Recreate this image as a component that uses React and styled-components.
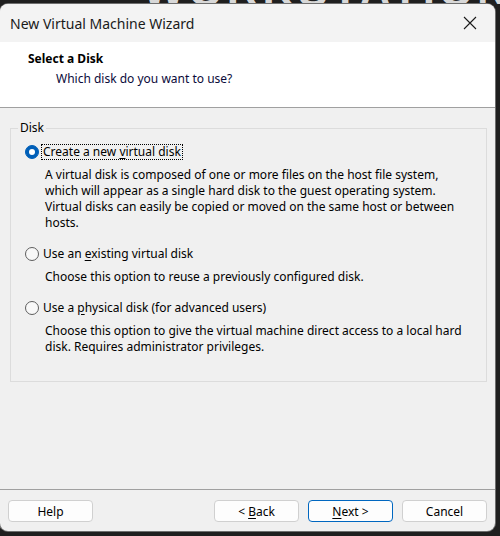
import styled, { createGlobalStyle } from "styled-components";

const GlobalStyle = createGlobalStyle`
  html, body {
    margin: 0;
    padding: 0;
    background: #1f1f1f;
  }
  * {
    box-sizing: border-box;
  }
`;

const Desktop = styled.div`
  width: 500px;
  height: 536px;
  overflow: hidden;
  display: flex;
  flex-direction: column;
  background: #1f1f1f;
  font-family: "Noto Sans", "Open Sans", sans-serif;
  font-size: 12px;
  color: #000;
`;

const Backdrop = styled.div`
  height: 4px;
  overflow: hidden;
  display: flex;
  align-items: flex-end;
  padding-left: 143px;
  flex-shrink: 0;
`;

const BackdropText = styled.span`
  font-family: "Liberation Sans", sans-serif;
  font-weight: 700;
  font-size: 44px;
  line-height: 44px;
  letter-spacing: 4px;
  color: #d8d8d8;
  white-space: nowrap;
  margin-bottom: -9px;
`;

const Window = styled.div`
  width: 495px;
  height: 527px;
  flex-shrink: 0;
  display: flex;
  flex-direction: column;
  background: #f0f0f0;
  border-radius: 8px;
  overflow: hidden;
  box-shadow: 0 0 0 1px #6e6e6e;
`;

const TitleBar = styled.div`
  height: 38px;
  flex-shrink: 0;
  display: flex;
  align-items: center;
  justify-content: space-between;
  padding: 0 12px 0 10px;
  background: #f3f3f3;
`;

const Title = styled.span`
  font-size: 14px;
  color: #1a1a1a;
`;

const CloseButton = styled.button`
  width: 26px;
  height: 26px;
  padding: 0;
  border: none;
  background: transparent;
  display: flex;
  align-items: center;
  justify-content: center;
`;

const Header = styled.div`
  height: 66px;
  flex-shrink: 0;
  background: #fff;
  border-bottom: 1px solid #a0a0a0;
  padding: 9px 0 0 28px;
`;

const HeaderTitle = styled.div`
  font-weight: 700;
  line-height: 16px;
`;

const HeaderSub = styled.div`
  margin: 4px 0 0 28px;
  line-height: 16px;
  color: #0a0a3a;
`;

const Body = styled.div`
  flex: 1;
  padding: 12px 8px 0 10px;
`;

const GroupBox = styled.fieldset`
  margin: 0;
  padding: 0;
  height: 262px;
  border: 1px solid #dcdcdc;
  border-radius: 0;
`;

const Legend = styled.legend`
  margin-left: 7px;
  padding: 0 2px;
  line-height: 16px;
`;

const GroupContent = styled.div`
  padding: 0 10px 0 14px;
`;

const Option = styled.div`
  margin-top: ${(p) => p.$gap}px;
`;

const OptionRow = styled.label`
  display: flex;
  align-items: center;
  height: 16px;
`;

const Radio = styled.span`
  width: 14px;
  height: 14px;
  border-radius: 50%;
  flex-shrink: 0;
  display: flex;
  align-items: center;
  justify-content: center;
  background: ${(p) => (p.$checked ? "#005fb8" : "#f8f8f8")};
  border: 1px solid ${(p) => (p.$checked ? "#005fb8" : "#5e5e5e")};
  margin-right: 3px;

  &::after {
    content: "";
    display: ${(p) => (p.$checked ? "block" : "none")};
    width: 6px;
    height: 6px;
    border-radius: 50%;
    background: #fff;
  }
`;

const OptionLabel = styled.span`
  line-height: 14px;
  padding: 0 1px;
  outline: ${(p) => (p.$focused ? "1px dotted #000" : "none")};
`;

const Key = styled.span`
  text-decoration: underline;
  text-underline-offset: 2px;
`;

const Description = styled.div`
  margin: 7px 0 0 20px;
  line-height: 16px;
`;

const Footer = styled.div`
  height: 42px;
  flex-shrink: 0;
  border-top: 1px solid #a0a0a0;
  display: flex;
  align-items: flex-start;
  padding: 10px 8px 0 8px;
`;

const Button = styled.button`
  width: 85px;
  height: 22px;
  padding: 0;
  font-family: inherit;
  font-size: 12px;
  color: #000;
  background: #fdfdfd;
  border: 1px solid ${(p) => (p.$primary ? "#0067c0" : "#d0d0d0")};
  border-radius: 4px;
  margin-left: ${(p) => p.$offset || 0}px;
`;

function CloseIcon() {
  return (
    <svg width="14" height="14" viewBox="0 0 14 14">
      <path d="M1 1 L13 13 M13 1 L1 13" stroke="#1a1a1a" strokeWidth="1.1" fill="none" />
    </svg>
  );
}

export default function App() {
  return (
    <>
      <GlobalStyle />
      <Desktop>
        <Backdrop aria-hidden="true">
          <BackdropText>WORKSTATION PRO</BackdropText>
        </Backdrop>
        <Window>
          <TitleBar>
            <Title>New Virtual Machine Wizard</Title>
            <CloseButton aria-label="Close">
              <CloseIcon />
            </CloseButton>
          </TitleBar>
          <Header>
            <HeaderTitle>Select a Disk</HeaderTitle>
            <HeaderSub>Which disk do you want to use?</HeaderSub>
          </Header>
          <Body>
            <GroupBox>
              <Legend>Disk</Legend>
              <GroupContent>
                <Option $gap={8}>
                  <OptionRow>
                    <Radio $checked />
                    <OptionLabel $focused>
                      Create a new <Key>v</Key>irtual disk
                    </OptionLabel>
                  </OptionRow>
                  <Description>
                    A virtual disk is composed of one or more files on the host file system,
                    <br />
                    which will appear as a single hard disk to the guest operating system.
                    <br />
                    Virtual disks can easily be copied or moved on the same host or between
                    <br />
                    hosts.
                  </Description>
                </Option>
                <Option $gap={15}>
                  <OptionRow>
                    <Radio />
                    <OptionLabel>
                      Use an <Key>e</Key>xisting virtual disk
                    </OptionLabel>
                  </OptionRow>
                  <Description>Choose this option to reuse a previously configured disk.</Description>
                </Option>
                <Option $gap={15}>
                  <OptionRow>
                    <Radio />
                    <OptionLabel>
                      Use a <Key>p</Key>hysical disk (for advanced users)
                    </OptionLabel>
                  </OptionRow>
                  <Description>
                    Choose this option to give the virtual machine direct access to a local hard
                    <br />
                    disk. Requires administrator privileges.
                  </Description>
                </Option>
              </GroupContent>
            </GroupBox>
          </Body>
          <Footer>
            <Button>Help</Button>
            <Button $offset={121}>
              &lt; <Key>B</Key>ack
            </Button>
            <Button $primary $offset={9}>
              <Key>N</Key>ext &gt;
            </Button>
            <Button $offset={9}>Cancel</Button>
          </Footer>
        </Window>
      </Desktop>
    </>
  );
}
